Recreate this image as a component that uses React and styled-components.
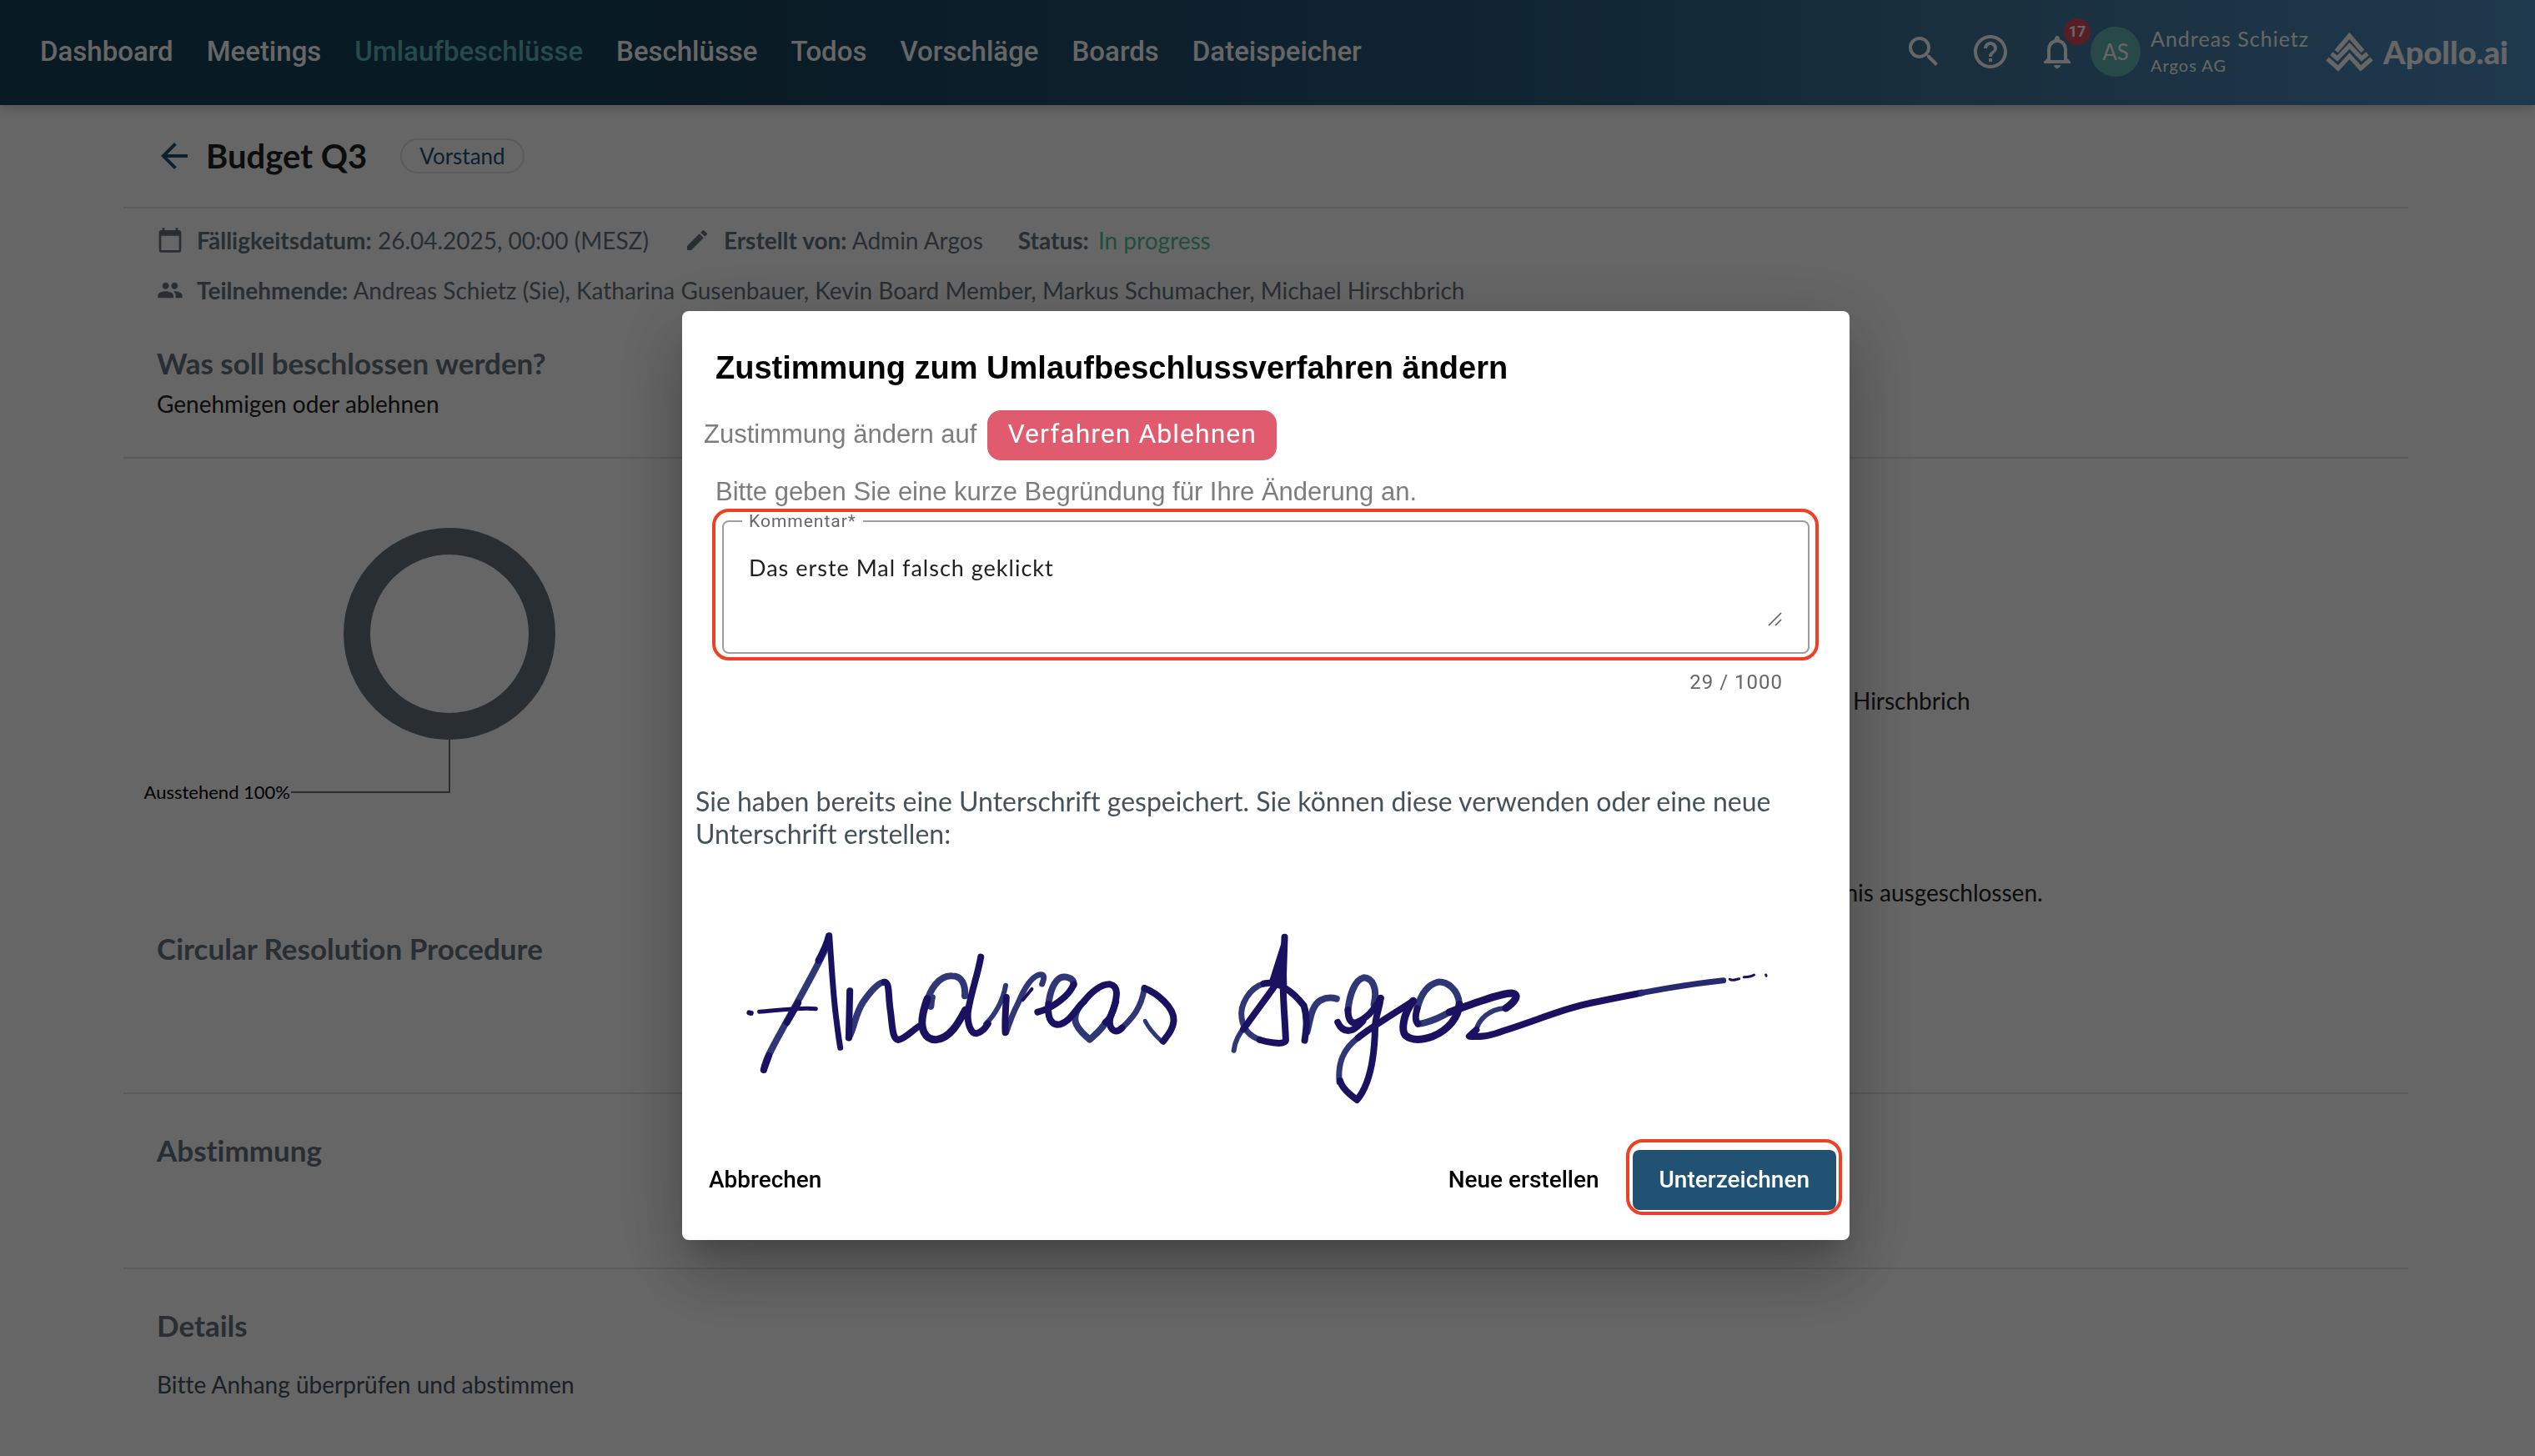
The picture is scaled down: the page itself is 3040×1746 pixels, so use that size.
import React, { useState } from "react";
import styled, { createGlobalStyle } from "styled-components";
import {
  MdArrowBack,
  MdCalendarToday,
  MdEdit,
  MdHelpOutline,
  MdNotificationsNone,
  MdPeople,
  MdSearch,
} from "react-icons/md";

const roboto = `Roboto, "Liberation Sans", sans-serif`;
const lato = `Lato, "Liberation Sans", sans-serif`;
const arial = `"Liberation Sans", Arial, sans-serif`;

const color = {
  brand: "#215273",
  slate: "#66747d",
  slateDark: "#45525b",
  line: "#e0e0e0",
  mark: "#ee4023",
};

const GlobalStyle = createGlobalStyle`
  *, *::before, *::after { box-sizing: border-box; }
  body {
    margin: 0;
    background: #fff;
    font-family: ${lato};
    overflow: hidden;
  }
  h1, h2, p { margin: 0; }
  button { font: inherit; border: 0; background: none; padding: 0; cursor: pointer; }
  svg { display: block; }
  #root { font-variant-ligatures: none; }
`;

/* ---------- App bar ---------- */

const AppBar = styled.header`
  display: flex;
  align-items: center;
  justify-content: space-between;
  height: 126px;
  padding: 0 32px 2px 48px;
  color: #fff;
  background: linear-gradient(90deg, #164158 25%, #285a7d 59%, #3f7599 76%, #4d8dc0 100%);
  box-shadow: 0 4px 12px rgba(0, 0, 0, 0.2);
`;

const Nav = styled.nav`
  display: flex;
  gap: 40px;
`;

const NavLink = styled.a`
  font-family: ${roboto};
  font-weight: 500;
  font-size: 33px;
  line-height: 40px;
  text-decoration: none;
  color: ${({ $active }) => ($active ? "#62b9bb" : "#fff")};
`;

const Tools = styled.div`
  display: flex;
  align-items: center;
`;

const IconButtons = styled.div`
  display: flex;
  gap: 32px;
`;

const IconButton = styled.button`
  position: relative;
  color: #fff;
`;

const Badge = styled.span`
  position: absolute;
  top: -16px;
  left: 32px;
  width: 32px;
  height: 32px;
  border-radius: 50%;
  background: #dc4c5c;
  font-family: ${roboto};
  font-weight: 700;
  font-size: 18px;
  line-height: 32px;
  text-align: center;
`;

const Avatar = styled.span`
  width: 60px;
  height: 60px;
  margin-left: 16px;
  border-radius: 50%;
  background: #61b8b4;
  font-size: 26px;
  line-height: 60px;
  text-align: center;
`;

const Account = styled.div`
  margin-left: 12px;
  letter-spacing: 1px;
  line-height: 32px;
`;

const AccountName = styled.div`
  font-size: 25px;
`;

const AccountOrg = styled.div`
  font-size: 20px;
`;

const Brand = styled.a`
  display: flex;
  align-items: center;
  gap: 12px;
  margin-left: 20px;
  color: inherit;
  text-decoration: none;
  font-weight: 900;
  font-size: 38px;
  line-height: 44px;
`;

/* ---------- Page ---------- */

const Page = styled.main`
  padding: 0 152px 0 148px;
`;

const Section = styled.section`
  padding: ${({ $pad }) => $pad || "0 40px"};
  border-bottom: ${({ $last }) => ($last ? "0" : `2px solid ${color.line}`)};
`;

const TitleBar = styled.div`
  display: flex;
  align-items: center;
  height: 122px;
  padding: 0 37px;
`;

const BackButton = styled.button`
  color: ${color.brand};
`;

const PageTitle = styled.h1`
  margin: 0 40px 0 14px;
  font-weight: 700;
  font-size: 40px;
  line-height: 48px;
  color: #212121;
`;

const Chip = styled.span`
  padding: 0 21px;
  border: 2px solid ${color.line};
  border-radius: 21px;
  font-size: 26px;
  line-height: 38px;
  color: ${color.brand};
`;

const MetaRow = styled.div`
  display: flex;
  align-items: center;
  gap: 42px;
  height: 60px;
  font-size: 28px;
  color: ${color.slate};
`;

const MetaItem = styled.span`
  display: flex;
  align-items: center;
  gap: 16px;
`;

const Status = styled.span`
  margin-left: 4px;
  color: #4fc49a;
`;

const Heading = styled.h2`
  font-weight: 700;
  font-size: 35px;
  line-height: 48px;
  color: ${color.slate};
`;

const BodyText = styled.p`
  margin-top: ${({ $gap }) => $gap || "0"};
  padding-left: ${({ $indent }) => ($indent ? "24px" : "0")};
  font-size: 28px;
  line-height: 40px;
  color: ${({ $muted }) => ($muted ? color.slateDark : "#212121")};
`;

const Result = styled.div`
  display: grid;
  grid-template-columns: 1fr 770px;
  height: 563px;
`;

const Notes = styled.div`
  display: grid;
  align-content: start;
  gap: 190px;
  padding-top: 270px;
`;

const Indent = styled.div`
  padding-left: 40px;
`;

const ChartLabel = styled.text`
  font-family: ${lato};
  font-size: 22px;
  fill: #000;
`;

/* ---------- Dialog ---------- */

const Backdrop = styled.div`
  position: fixed;
  inset: 0;
  display: flex;
  justify-content: center;
  align-items: flex-start;
  padding: 373px 4px 0 0;
  background: rgba(0, 0, 0, 0.6);
`;

const Dialog = styled.div`
  width: 1400px;
  padding-bottom: 30px;
  border-radius: 8px;
  background: #fff;
  box-shadow: 0 22px 30px -14px rgba(0, 0, 0, 0.2), 0 48px 76px 6px rgba(0, 0, 0, 0.14),
    0 18px 92px 16px rgba(0, 0, 0, 0.12);
`;

const DialogTitle = styled.h2`
  padding: 46px 40px 0;
  font-family: ${arial};
  font-weight: 700;
  font-size: 38px;
  line-height: 44px;
  color: #000;
`;

const ChangeRow = styled.div`
  display: flex;
  align-items: baseline;
  gap: 13px;
  margin-top: 29px;
  padding: 0 26px;
  font-family: ${arial};
  font-size: 31px;
  line-height: 36px;
  color: #7d7d7d;
`;

const Decision = styled.span`
  padding: 8px 24px 12px;
  border-radius: 16px;
  background: #e15b6f;
  font-family: ${roboto};
  font-size: 32px;
  line-height: 40px;
  letter-spacing: 1px;
  color: #fff;
`;

const Hint = styled.p`
  padding: 20px 40px 2px;
  font-family: ${arial};
  font-size: 31px;
  line-height: 36px;
  color: #7d7d7d;
`;

const FieldMark = styled.div`
  margin: 0 37px 0 36px;
  padding: 3px 7px 4px 8px;
  border: 4px solid ${color.mark};
  border-radius: 20px;
`;

const Field = styled.fieldset`
  margin: 0;
  padding: 31px 30px 30px 22px;
  border: 2px solid #9e9e9e;
  border-radius: 8px;
`;

const FieldLegend = styled.legend`
  padding: 0 8px;
  font-family: ${roboto};
  font-size: 21px;
  line-height: 16px;
  letter-spacing: 1px;
  color: #666;
`;

const AreaWrap = styled.div`
  position: relative;
  padding-left: 8px;
`;

const Area = styled.textarea`
  display: block;
  width: 100%;
  height: 88px;
  padding: 0;
  border: 0;
  outline: 0;
  resize: none;
  background: transparent;
  font-family: ${lato};
  font-size: 27px;
  line-height: 34px;
  letter-spacing: 1px;
  color: #212121;
`;

const Grip = styled.svg`
  position: absolute;
  right: 0;
  bottom: 0;
`;

const Counter = styled.p`
  padding: 10px 80px 0;
  font-family: ${roboto};
  font-size: 24px;
  line-height: 32px;
  letter-spacing: 1px;
  text-align: right;
  color: #666;
`;

const Saved = styled.p`
  padding: 107px 16px 0;
  font-size: 32px;
  line-height: 39px;
  color: ${color.slateDark};
`;

const SignatureBox = styled.div`
  padding: 62px 16px 15px;
`;

const Actions = styled.div`
  display: flex;
  align-items: flex-end;
  gap: 32px;
  padding: 0 9px 0 32px;
`;

const TextButton = styled.button`
  height: 84px;
  margin-right: ${({ $push }) => ($push ? "auto" : "0")};
  && {
    font-family: ${roboto};
    font-weight: 500;
    font-size: 28px;
    line-height: 32px;
  }
  color: #000;
`;

const ButtonMark = styled.div`
  padding: 9px 3px 2px 4px;
  border: 4px solid ${color.mark};
  border-radius: 20px;
`;

const PrimaryButton = styled.button`
  height: 72px;
  && {
    padding: 0 32px;
    background: ${color.brand};
    font-family: ${roboto};
    font-weight: 500;
    font-size: 28px;
    line-height: 32px;
  }
  border-radius: 8px;
  color: #fff;
`;

const navItems = [
  "Dashboard",
  "Meetings",
  "Umlaufbeschlüsse",
  "Beschlüsse",
  "Todos",
  "Vorschläge",
  "Boards",
  "Dateispeicher",
];

function BrandMark() {
  return (
    <svg width="57" height="47" viewBox="925 78 170 142" fill="none" stroke="currentColor" strokeWidth="16">
      <path d="M962 146 L1010 90 L1058 146" />
      <path d="M945 154 L966 172 L1010 126 L1054 172 L1075 154" />
      <path d="M930 173 L969 208 L1010 163 L1051 208 L1090 173" />
    </svg>
  );
}

function VoteChart() {
  return (
    <svg width="660" height="523" viewBox="0 0 660 523" role="img" aria-label="Ausstehend 100%">
      <circle cx="391" cy="210" r="111" fill="none" stroke="#66747d" strokeWidth="32" />
      <path d="M391 337 V400 H201" fill="none" stroke="#66747d" strokeWidth="2" />
      <ChartLabel x="200" y="408" textAnchor="end">Ausstehend 100%</ChartLabel>
    </svg>
  );
}

function Signature() {
  return (
    <svg
      width="100%"
      viewBox="0 0 1368 270"
      fill="none"
      stroke="#1a1160"
      strokeLinecap="round"
      strokeLinejoin="round"
      role="img"
      aria-label="Unterschrift"
    >
      <g transform="translate(26 0) scale(0.408 0.3333)" strokeWidth="8">
        <g stroke="#2f3777">
          <path vectorEffect="non-scaling-stroke" d="M326 150 C300 225 230 375 185 475 C160 530 140 575 137 606" />
          <path vectorEffect="non-scaling-stroke" d="M387 490 C405 450 405 405 430 360 C450 325 475 290 492 290" />
          <path vectorEffect="non-scaling-stroke" d="M728 340 C730 300 720 268 690 268 C650 266 625 320 614 370 M632 345 C628 360 630 370 628 378" />
          <path vectorEffect="non-scaling-stroke" d="M790 440 C815 410 840 360 848 302" strokeWidth="6" />
          <path vectorEffect="non-scaling-stroke" d="M850 470 C858 440 870 400 885 365 C900 320 920 275 945 264 C964 260 962 275 955 297" strokeWidth="7" />
          <path vectorEffect="non-scaling-stroke" d="M1048 300 C1050 272 1020 268 1008 275 C988 290 978 330 974 370" />
          <path vectorEffect="non-scaling-stroke" d="M1070 370 C1050 400 1046 430 1062 455 C1075 478 1085 485 1095 497 C1110 480 1130 462 1142 435" />
          <path vectorEffect="non-scaling-stroke" d="M1190 455 C1220 420 1246 385 1256 312" strokeWidth="7" />
          <path vectorEffect="non-scaling-stroke" d="M1258 430 C1270 460 1288 482 1305 502" strokeWidth="5" />
        </g>
        <path vectorEffect="non-scaling-stroke" d="M330 122 C335 200 340 330 350 420 C354 460 358 500 362 526" strokeWidth="7" />
        <path vectorEffect="non-scaling-stroke" d="M328 125 C322 155 310 185 298 212 M238 365 L205 435 M152 555 L137 606" />
        <path vectorEffect="non-scaling-stroke" d="M124 397 C170 393 240 380 290 386" strokeWidth="5" />
        <path vectorEffect="non-scaling-stroke" d="M94 400 L100 402" strokeWidth="6" />
        <path vectorEffect="non-scaling-stroke" d="M390 322 L387 490" />
        <path vectorEffect="non-scaling-stroke" d="M492 290 C508 292 502 340 510 400 C515 450 515 495 532 498 C550 496 570 468 592 450" />
        <path vectorEffect="non-scaling-stroke" d="M618 350 C606 390 596 440 608 470 C618 495 632 498 645 497 C688 490 712 430 730 390" strokeWidth="9" />
        <path vectorEffect="non-scaling-stroke" d="M775 200 C765 270 745 330 737 400 C735 440 745 475 762 475 C780 470 788 455 796 440" />
        <path vectorEffect="non-scaling-stroke" d="M850 345 C848 390 845 430 847 472" />
        <path vectorEffect="non-scaling-stroke" d="M925 315 C915 330 905 345 898 355" strokeWidth="4" />
        <path vectorEffect="non-scaling-stroke" d="M942 398 C985 385 1035 340 1048 298 M974 370 C970 425 985 448 1008 442 C1040 430 1055 385 1078 360" />
        <path vectorEffect="non-scaling-stroke" d="M1078 360 C1100 325 1130 296 1155 298 C1182 305 1174 345 1168 375 C1162 410 1148 428 1142 435" />
        <path vectorEffect="non-scaling-stroke" d="M1172 360 C1162 400 1148 425 1156 450 C1165 472 1178 470 1190 455" />
        <path vectorEffect="non-scaling-stroke" d="M1256 312 C1290 328 1345 380 1342 430 C1340 460 1325 480 1311 503" />
      </g>
      <g transform="translate(606 0) scale(0.4719 0.3333)" strokeWidth="8">
        <g stroke="#2f3777">
          <path vectorEffect="non-scaling-stroke" d="M160 296 C125 310 98 370 104 420 C108 460 125 485 150 497" strokeWidth="7" />
          <path vectorEffect="non-scaling-stroke" d="M116 440 C96 480 86 505 84 536" strokeWidth="6" />
          <path vectorEffect="non-scaling-stroke" d="M270 470 C278 430 280 375 305 355 C322 343 335 346 345 350" />
          <path vectorEffect="non-scaling-stroke" d="M440 370 C450 310 435 275 414 274 C390 282 378 340 374 390" />
          <path vectorEffect="non-scaling-stroke" d="M352 650 C348 580 362 530 400 490" strokeWidth="7" />
          <path vectorEffect="non-scaling-stroke" d="M657 370 C655 315 625 288 603 290 C575 300 558 340 550 385" />
          <path vectorEffect="non-scaling-stroke" d="M552 440 C580 438 610 415 632 398" />
          <path vectorEffect="non-scaling-stroke" d="M772 384 C735 388 708 420 700 462" strokeWidth="6" />
        </g>
        <path d="M213 126 L176 290 L216 300 Z" fill="#1a1160" strokeWidth="6" />
        <path vectorEffect="non-scaling-stroke" d="M213 128 L209 300 C210 380 215 450 216 500 C214 516 180 510 150 498" />
        <path vectorEffect="non-scaling-stroke" d="M160 296 C195 282 235 325 262 375 C272 420 268 460 264 500" />
        <path vectorEffect="non-scaling-stroke" d="M190 300 C165 350 135 405 108 460" />
        <path vectorEffect="non-scaling-stroke" d="M374 390 C374 420 380 440 395 436 C425 420 445 380 457 348" />
        <path vectorEffect="non-scaling-stroke" d="M348 435 C358 465 372 468 385 462 C398 452 405 440 412 430" />
        <path vectorEffect="non-scaling-stroke" d="M457 348 C455 380 443 420 443 450 C442 540 435 650 397 714 C378 695 358 670 354 645" />
        <path vectorEffect="non-scaling-stroke" d="M400 490 C430 455 495 400 540 358" />
        <path vectorEffect="non-scaling-stroke" d="M540 358 C512 410 510 465 520 482 C535 500 560 500 590 485 C630 462 655 415 657 370" strokeWidth="9" />
        <path vectorEffect="non-scaling-stroke" d="M550 385 C545 410 544 430 552 440" />
        <path vectorEffect="non-scaling-stroke" d="M632 398 C690 370 760 330 790 330 C814 335 795 365 775 384" strokeWidth="9" />
        <path vectorEffect="non-scaling-stroke" d="M700 462 L682 485 C720 490 745 478 770 465 C850 430 930 380 1010 360 C1050 348 1080 340 1120 329" />
        <path vectorEffect="non-scaling-stroke" d="M1120 329 C1190 310 1250 296 1328 284" strokeWidth="7" stroke="#262a6e" />
        <path vectorEffect="non-scaling-stroke" d="M1344 280 C1352 288 1360 280 1368 278 M1380 272 C1390 272 1398 272 1406 264 M1436 264 L1437 268" strokeWidth="3" />
      </g>
    </svg>
  );
}

function ApprovalDialog() {
  const [comment, setComment] = useState("Das erste Mal falsch geklickt");
  return (
    <Backdrop>
      <Dialog role="dialog" aria-modal="true" aria-labelledby="dialog-title">
        <DialogTitle id="dialog-title">Zustimmung zum Umlaufbeschlussverfahren ändern</DialogTitle>
        <ChangeRow>
          <span>Zustimmung ändern auf</span>
          <Decision>Verfahren Ablehnen</Decision>
        </ChangeRow>
        <Hint>Bitte geben Sie eine kurze Begründung für Ihre Änderung an.</Hint>
        <FieldMark>
          <Field>
            <FieldLegend>
              <label htmlFor="comment">Kommentar*</label>
            </FieldLegend>
            <AreaWrap>
              <Area
                id="comment"
                maxLength={1000}
                spellCheck={false}
                value={comment}
                onChange={(event) => setComment(event.target.value)}
              />
              <Grip width="18" height="18" viewBox="0 0 18 18" stroke="#555" strokeWidth="1.5" aria-hidden="true">
                <path d="M1 16 L16 1 M9 16 L16 9" />
              </Grip>
            </AreaWrap>
          </Field>
        </FieldMark>
        <Counter>{comment.length} / 1000</Counter>
        <Saved>
          Sie haben bereits eine Unterschrift gespeichert. Sie können diese verwenden oder eine neue Unterschrift
          erstellen:
        </Saved>
        <SignatureBox>
          <Signature />
        </SignatureBox>
        <Actions>
          <TextButton type="button" $push>Abbrechen</TextButton>
          <TextButton type="button">Neue erstellen</TextButton>
          <ButtonMark>
            <PrimaryButton type="button">Unterzeichnen</PrimaryButton>
          </ButtonMark>
        </Actions>
      </Dialog>
    </Backdrop>
  );
}

export default function App() {
  return (
    <>
      <GlobalStyle />
      <AppBar>
        <Nav>
          {navItems.map((item) => (
            <NavLink key={item} href="#" $active={item === "Umlaufbeschlüsse"}>
              {item}
            </NavLink>
          ))}
        </Nav>
        <Tools>
          <IconButtons>
            <IconButton type="button" aria-label="Suche"><MdSearch size={48} /></IconButton>
            <IconButton type="button" aria-label="Hilfe"><MdHelpOutline size={48} /></IconButton>
            <IconButton type="button" aria-label="Benachrichtigungen">
              <MdNotificationsNone size={48} />
              <Badge>17</Badge>
            </IconButton>
          </IconButtons>
          <Avatar>AS</Avatar>
          <Account>
            <AccountName>Andreas Schietz</AccountName>
            <AccountOrg>Argos AG</AccountOrg>
          </Account>
          <Brand href="#">
            <BrandMark />
            Apollo.ai
          </Brand>
        </Tools>
      </AppBar>
      <Page>
        <Section $pad="0">
          <TitleBar>
            <BackButton type="button" aria-label="Zurück"><MdArrowBack size={48} /></BackButton>
            <PageTitle>Budget Q3</PageTitle>
            <Chip>Vorstand</Chip>
          </TitleBar>
        </Section>
        <Section $pad="8px 40px 44px">
          <MetaRow>
            <MetaItem>
              <MdCalendarToday size={32} />
              <span><b>Fälligkeitsdatum:</b> 26.04.2025, 00:00 (MESZ)</span>
            </MetaItem>
            <MetaItem>
              <MdEdit size={32} />
              <span><b>Erstellt von:</b> Admin Argos</span>
            </MetaItem>
            <span><b>Status:</b> <Status>In progress</Status></span>
          </MetaRow>
          <MetaRow>
            <MetaItem>
              <MdPeople size={32} />
              <span>
                <b>Teilnehmende:</b> Andreas Schietz (Sie), Katharina Gusenbauer, Kevin Board Member, Markus
                Schumacher, Michael Hirschbrich
              </span>
            </MetaItem>
          </MetaRow>
          <BodyText as="div" $gap="33px">
            <Heading>Was soll beschlossen werden?</Heading>
          </BodyText>
          <BodyText $gap="5px">Genehmigen oder ablehnen</BodyText>
        </Section>
        <Section $pad="0 0 149px">
          <Result>
            <VoteChart />
            <Notes>
              <BodyText>Michael Hirschbrich</BodyText>
              <BodyText $indent>Ergebnis ausgeschlossen.</BodyText>
            </Notes>
          </Result>
          <Indent>
            <Heading>Circular Resolution Procedure</Heading>
          </Indent>
        </Section>
        <Section $pad="43px 40px 117px">
          <Heading>Abstimmung</Heading>
        </Section>
        <Section $pad="43px 40px 40px" $last>
          <Heading>Details</Heading>
          <BodyText $gap="27px" $muted>Bitte Anhang überprüfen und abstimmen</BodyText>
        </Section>
      </Page>
      <ApprovalDialog />
    </>
  );
}
